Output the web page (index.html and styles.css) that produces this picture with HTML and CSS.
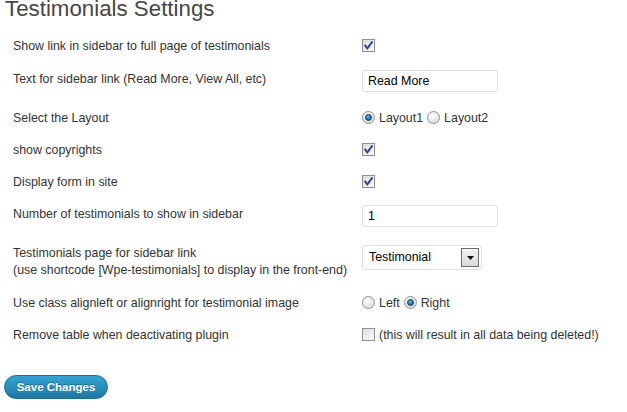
FILE: index.html
```html
<!DOCTYPE html>
<html>
<head>
<meta charset="utf-8">
<title>Testimonials Settings</title>
<link rel="stylesheet" href="styles.css">
</head>
<body>
<div class="wrap">
  <h2 class="title">Testimonials Settings</h2>
  <form class="settings">
    <table class="form-table">
      <tr class="row">
        <th>Show link in sidebar to full page of testimonials</th>
        <td><div class="choice"><span class="cb checked"><svg viewBox="0 0 13 13" width="13" height="13"><path d="M3.2 6.6 L5.4 9.4 L9.9 3.2" fill="none" stroke="#31448f" stroke-width="1.9" stroke-linecap="square"/></svg></span></div></td>
      </tr>
      <tr class="row row-input">
        <th>Text for sidebar link (Read More, View All, etc)</th>
        <td><span class="text-input">Read More</span></td>
      </tr>
      <tr class="row">
        <th>Select the Layout</th>
        <td><div class="choice"><span class="radio checked"></span><span class="opt">Layout1</span><span class="radio"></span><span class="opt">Layout2</span></div></td>
      </tr>
      <tr class="row">
        <th>show copyrights</th>
        <td><div class="choice"><span class="cb checked"><svg viewBox="0 0 13 13" width="13" height="13"><path d="M3.2 6.6 L5.4 9.4 L9.9 3.2" fill="none" stroke="#31448f" stroke-width="1.9" stroke-linecap="square"/></svg></span></div></td>
      </tr>
      <tr class="row">
        <th>Display form in site</th>
        <td><div class="choice"><span class="cb checked"><svg viewBox="0 0 13 13" width="13" height="13"><path d="M3.2 6.6 L5.4 9.4 L9.9 3.2" fill="none" stroke="#31448f" stroke-width="1.9" stroke-linecap="square"/></svg></span></div></td>
      </tr>
      <tr class="row row-input2">
        <th>Number of testimonials to show in sidebar</th>
        <td><span class="text-input">1</span></td>
      </tr>
      <tr class="row row-select">
        <th>Testimonials page for sidebar link<br>(use shortcode [Wpe-testimonials] to display in the front-end)</th>
        <td><span class="select"><span class="select-val">Testimonial</span><span class="select-arrow"><svg viewBox="0 0 7 4" width="7" height="4"><path d="M0 0 H7 L3.5 4 Z" fill="#111"/></svg></span></span></td>
      </tr>
      <tr class="row">
        <th>Use class alignleft or alignright for testimonial image</th>
        <td><div class="choice"><span class="radio"></span><span class="opt">Left</span><span class="radio checked"></span><span class="opt">Right</span></div></td>
      </tr>
      <tr class="row">
        <th>Remove table when deactivating plugin</th>
        <td><div class="choice"><span class="cb"></span><span class="opt">(this will result in all data being deleted!)</span></div></td>
      </tr>
    </table>
    <div class="submit">
      <span class="button-primary">Save Changes</span>
    </div>
  </form>
</div>
</body>
</html>
```
FILE: styles.css
```css
html, body {
  margin: 0;
  padding: 0;
  background: #fff;
}
body {
  font-family: "Liberation Sans", Arial, sans-serif;
  color: #333;
}
.wrap {
  padding: 0 4px;
}
.title {
  margin: 0 0 12px 0;
  font-size: 22.3px;
  line-height: 17px;
  font-weight: normal;
  color: #464646;
  padding-left: 1px;
}
.form-table {
  border-collapse: collapse;
  border-spacing: 0;
}
.form-table th,
.form-table td {
  padding: 8px 0;
  vertical-align: top;
  font-size: 12.4px;
  line-height: 16px;
  font-weight: normal;
  text-align: left;
}
.form-table th {
  width: 349px;
  padding: 9px 0 7px 9px;
  color: #333;
}
.row-input td {
  padding-top: 9px;
  padding-bottom: 9px;
}
.row-input th {
  padding-top: 10px;
  padding-bottom: 8px;
}
.row-input2 td {
  padding-top: 8px;
  padding-bottom: 9px;
}
.row-input2 th {
  padding-top: 9px;
  padding-bottom: 8px;
}
.row-select th,
.row-select td {
  line-height: 17px;
}
.row-select td {
  padding-top: 9px;
  padding-bottom: 7px;
}
.row-select th {
  padding-top: 9px;
  padding-bottom: 7px;
}
.choice {
  display: flex;
  align-items: flex-start;
  height: 16px;
}
.choice .opt {
  margin-left: 4px;
  margin-right: 4px;
  color: #333;
  line-height: 16px;
  position: relative;
  top: 1px;
}
.cb {
  display: block;
  flex: none;
  box-sizing: border-box;
  width: 13px;
  height: 13px;
  border: 1px solid #8f8f8f;
  background: linear-gradient(135deg, #dcdcdc, #fbfbfb);
  margin-top: 2px;
}
.cb svg {
  display: block;
  margin: -1px 0 0 -1px;
}
.text-input {
  display: block;
  box-sizing: border-box;
  width: 136px;
  height: 22px;
  border: 1px solid #dfdfdf;
  border-radius: 3px;
  padding: 0 5px;
  line-height: 20px;
  color: #000;
  font-size: 12.4px;
  background: #fff;
}
.radio {
  display: block;
  flex: none;
  box-sizing: border-box;
  width: 13px;
  height: 13px;
  border-radius: 50%;
  border: 1px solid #8e8f8f;
  background: radial-gradient(circle at 40% 35%, #fdfdfd, #d4d4d4);
  margin-top: 2px;
  position: relative;
}
.radio.checked::after {
  content: "";
  position: absolute;
  left: 2px;
  top: 2px;
  width: 7px;
  height: 7px;
  box-sizing: border-box;
  border-radius: 50%;
  border: 1px solid #1f3d5c;
  background: radial-gradient(circle at 40% 35%, #5ec0ef, #13669e 70%);
}
.select {
  display: flex;
  box-sizing: border-box;
  width: 120px;
  height: 25px;
  border: 1px solid #dfdfdf;
  border-radius: 3px;
  align-items: center;
  justify-content: space-between;
  padding: 0 2px 0 6px;
  background: #fff;
}
.select-val {
  color: #000;
}
.select-arrow {
  box-sizing: border-box;
  width: 18px;
  height: 19px;
  border: 1px solid #6d6d6d;
  background: linear-gradient(#f4f4f4, #d8d8d8);
  display: flex;
  align-items: center;
  justify-content: center;
}
.select-arrow svg {
  display: block;
}
.submit {
  padding: 25px 0 0 0;
}
.button-primary {
  display: inline-block;
  box-sizing: border-box;
  width: 104px;
  height: 24px;
  border: 1px solid #1f6f94;
  border-radius: 12px;
  background: linear-gradient(#35a3d4, #1f77a1);
  color: #fff;
  font-weight: bold;
  font-size: 11.5px;
  line-height: 22px;
  text-align: center;
  text-shadow: 0 -1px 0 rgba(0,0,0,0.3);
}
```
